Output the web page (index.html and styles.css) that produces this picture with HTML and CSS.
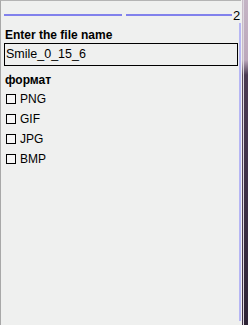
FILE: index.html
```html
<!DOCTYPE html>
<html>
<head>
<meta charset="utf-8">
<link rel="stylesheet" href="styles.css">
</head>
<body>
<div class="screen">
  <div class="panel">
    <div class="header">
      <span class="rule rule-a"></span>
      <span class="rule rule-b"></span>
      <span class="num">2</span>
    </div>
    <div class="body-row">
      <div class="content">
        <div class="label">Enter the file name</div>
        <div class="input">Smile_0_15_6</div>
        <div class="label fmt">формат</div>
        <div class="options">
          <label class="opt"><span class="box"></span>PNG</label>
          <label class="opt"><span class="box"></span>GIF</label>
          <label class="opt"><span class="box"></span>JPG</label>
          <label class="opt"><span class="box"></span>BMP</label>
        </div>
      </div>
      <div class="vbar"></div>
    </div>
  </div>
  <div class="desk">
    <div class="desk-line"></div>
    <div class="desk-gap"></div>
    <div class="desk-fill"></div>
  </div>
</div>
</body>
</html>
```
FILE: styles.css
```css
html, body {
  margin: 0;
  padding: 0;
}
body {
  width: 248px;
  height: 325px;
  overflow: hidden;
  background: #eff0ef;
  font-family: "Liberation Sans", Arial, sans-serif;
  color: #000;
}
.screen {
  display: flex;
  width: 248px;
  height: 325px;
}
.panel {
  width: 240px;
  height: 324px;
  border-top: 1px solid #b4b4b4;
  border-left: 1px solid #a8a8a8;
  display: flex;
  flex-direction: column;
  background: #eff0ef;
}
.header {
  display: flex;
  align-items: center;
  height: 28px;
  padding-left: 3px;
}
.rule {
  display: block;
  height: 2px;
  background: #8181ec;
}
.rule-a {
  width: 118px;
  margin-right: 4px;
}
.rule-b {
  width: 106px;
}
.num {
  font-size: 13px;
  line-height: 13px;
  margin-left: 1px;
  margin-top: 1px;
}
.body-row {
  flex: 1;
  display: flex;
}
.content {
  width: 236px;
  padding-left: 3px;
  margin-top: -1px;
}
.label {
  font-weight: bold;
  font-size: 12px;
  line-height: 14px;
  padding-left: 1px;
}
.input {
  margin-top: 1px;
  height: 21px;
  width: 231px;
  border: 1px solid #000;
  font-size: 12.5px;
  line-height: 21px;
  padding-left: 1px;
  box-sizing: content-box;
}
.fmt {
  margin-top: 7px;
}
.options {
  display: flex;
  flex-direction: column;
  margin-top: 2px;
}
.opt {
  display: flex;
  align-items: center;
  height: 20px;
  font-size: 12px;
}
.box {
  width: 8px;
  height: 8px;
  border: 1px solid #000;
  margin-left: 2px;
  margin-right: 4px;
  background: #f6f6f6;
}
.vbar {
  width: 2px;
  margin-top: -6px;
  margin-bottom: 4px;
  background: #b6b6f4;
}
.desk {
  flex: 1;
  display: flex;
  background: #eff0ef;
}
.desk-line {
  width: 1px;
  margin-left: 1px;
  background: linear-gradient(#c8bcc8 0, #c8bcc8 60px, #5a4a60 75px, #3e3046 100%);
}
.desk-gap {
  width: 1px;
  background: #ddd8e0;
}
.desk-fill {
  flex: 1;
  background: linear-gradient(#c4b4c4 0, #bca8bc 60px, #4a3a52 75px, #2e2436 100%);
}
```
